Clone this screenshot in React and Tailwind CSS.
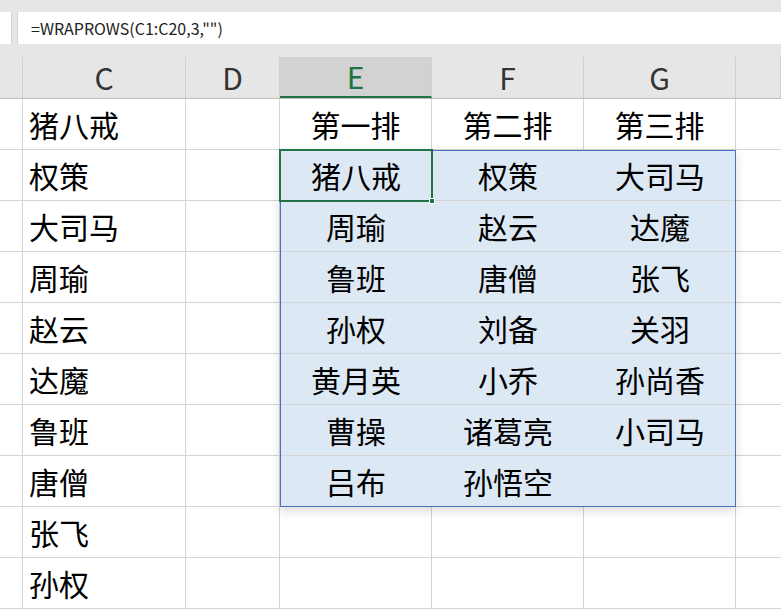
import React from "react";

const cols = [23, 163, 94, 152, 152, 152, 45];
const C = ["猪八戒","权策","大司马","周瑜","赵云","达魔","鲁班","唐僧","张飞","孙权"];
const spill = [
  ["猪八戒","权策","大司马"],["周瑜","赵云","达魔"],["鲁班","唐僧","张飞"],["孙权","刘备","关羽"],
  ["黄月英","小乔","孙尚香"],["曹操","诸葛亮","小司马"],["吕布","孙悟空",""],
];
const font = { fontFamily: '"Microsoft YaHei","Noto Sans CJK SC",sans-serif' };

export default function App() {
  const rows = C.map((c, i) => {
    let e = "", f = "", g = "";
    if (i === 0) [e, f, g] = ["第一排", "第二排", "第三排"];
    else if (spill[i - 1]) [e, f, g] = spill[i - 1];
    return [c, e, f, g];
  });
  return (
    <div className="w-[781px] h-[614px] overflow-hidden bg-white relative" style={font}>
      <div className="h-[57px] bg-[#e6e6e6] pt-[12px] flex">
        <div className="w-[12px] h-[32px] bg-white mr-[5px] border-r border-[#d0d0d0]"></div>
        <div className="flex-1 h-[32px] bg-white border-l border-[#d0d0d0] flex items-center pl-[13px] text-[16px] text-[#222]" style={{fontFamily:'"Microsoft YaHei","Noto Sans CJK SC",sans-serif'}}>=WRAPROWS(C1:C20,3,"")</div>
      </div>
      <div className="h-[42px] flex bg-[#e6e6e6] border-b border-[#bdbdbd]">
        {["", "C", "D", "E", "F", "G", ""].map((h, i) => (
          <div key={i} style={{ width: cols[i] }}
            className={`shrink-0 flex items-center justify-center text-[30px] border-r border-[#cfcfcf] ${h === "E" ? "bg-[#d2d2d2] text-[#217346] border-b-2 border-b-[#217346]" : "text-[#333]"}`}>{h}</div>
        ))}
      </div>
      {rows.map((r, i) => (
        <div key={i} className="h-[51px] flex border-b border-[#d4d4d4]">
          <div style={{ width: cols[0] }} className="shrink-0 border-r border-[#d4d4d4]"></div>
          <div style={{ width: cols[1] }} className="shrink-0 border-r border-[#d4d4d4] flex items-center pl-[6px] text-[30px] text-black">{r[0]}</div>
          <div style={{ width: cols[2] }} className="shrink-0 border-r border-[#d4d4d4]"></div>
          {[r[1], r[2], r[3]].map((t, j) => (
            <div key={j} style={{ width: cols[3 + j] }}
              className={`shrink-0 flex items-center justify-center text-[30px] text-black ${i >= 1 && i <= 7 ? "bg-[#dde8f5]" : "border-r border-[#d4d4d4]"}`}>{t}</div>
          ))}
          <div className="flex-1"></div>
        </div>
      ))}
      <div className="absolute left-[280px] top-[150px] w-[456px] h-[357px] border border-[#4a6fbf] shadow-[0_4px_10px_rgba(0,0,0,0.15)] pointer-events-none"></div>
      <div className="absolute left-[279px] top-[149px] w-[154px] h-[53px] border-2 border-[#217346] pointer-events-none">
        <div className="absolute right-[-4px] bottom-[-4px] w-[6px] h-[6px] bg-[#217346] border border-white"></div>
      </div>
    </div>
  );
}
